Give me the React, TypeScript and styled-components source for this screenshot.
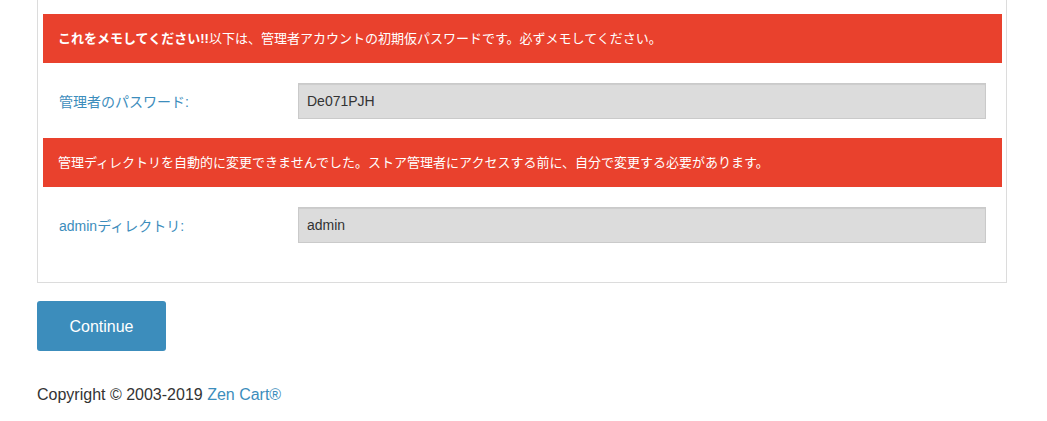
import React from 'react';
import styled, { createGlobalStyle } from 'styled-components';

const GlobalStyle = createGlobalStyle`
  html, body {
    margin: 0;
    padding: 0;
    background: #fff;
  }
  body {
    font-family: "Liberation Sans", "Noto Sans CJK JP", sans-serif;
    color: #333;
  }
`;

const Page = styled.div`
  padding-left: 37px;
  width: 970px;
`;

const Panel = styled.div`
  border: 1px solid #dcdcdc;
  border-top: none;
  padding: 14px 4px 20px 5px;
`;

const Alert = styled.div`
  background: #e9412d;
  color: #fff;
  font-size: 13px;
  line-height: 17px;
  padding: 16px 15px 16px 15px;

  strong {
    font-weight: bold;
  }
`;

const FormRow = styled.div`
  display: grid;
  grid-template-columns: 239px 688px;
  align-items: center;
  margin: 20px 0 19px;
  padding-left: 16px;
`;

const Label = styled.label`
  color: #3c8dbc;
  font-size: 14px;
`;

const Field = styled.input`
  box-sizing: border-box;
  height: 36px;
  width: 100%;
  margin: 0;
  padding: 0 8px;
  border: 1px solid #cacaca;
  background: #dcdcdc;
  box-shadow: inset 0 1px 1px rgba(0, 0, 0, 0.075);
  font-family: "Liberation Sans", sans-serif;
  font-size: 14px;
  color: #333;
  outline: none;
`;

const Button = styled.button`
  margin-top: 18px;
  width: 129px;
  height: 50px;
  border: none;
  border-radius: 3px;
  background: #3c8dbc;
  color: #fff;
  font-family: "Liberation Sans", sans-serif;
  font-size: 16px;
  padding-top: 2px;
  cursor: pointer;
`;

const Footer = styled.p`
  margin: 34px 0 0;
  font-size: 16px;
  line-height: 20px;
  color: #333;

  a {
    color: #3c8dbc;
    text-decoration: none;
  }
`;

export default function App() {
  return (
    <>
      <GlobalStyle />
      <Page>
        <Panel>
          <Alert>
            <strong>これをメモしてください!!</strong>以下は、管理者アカウントの初期仮パスワードです。必ずメモしてください。
          </Alert>
          <FormRow>
            <Label>管理者のパスワード:</Label>
            <Field readOnly value="De071PJH" />
          </FormRow>
          <Alert>
            管理ディレクトリを自動的に変更できませんでした。ストア管理者にアクセスする前に、自分で変更する必要があります。
          </Alert>
          <FormRow>
            <Label>adminディレクトリ:</Label>
            <Field readOnly value="admin" />
          </FormRow>
        </Panel>
        <Button>Continue</Button>
        <Footer>
          Copyright © 2003-2019 <a href="#">Zen Cart®</a>
        </Footer>
      </Page>
    </>
  );
}
